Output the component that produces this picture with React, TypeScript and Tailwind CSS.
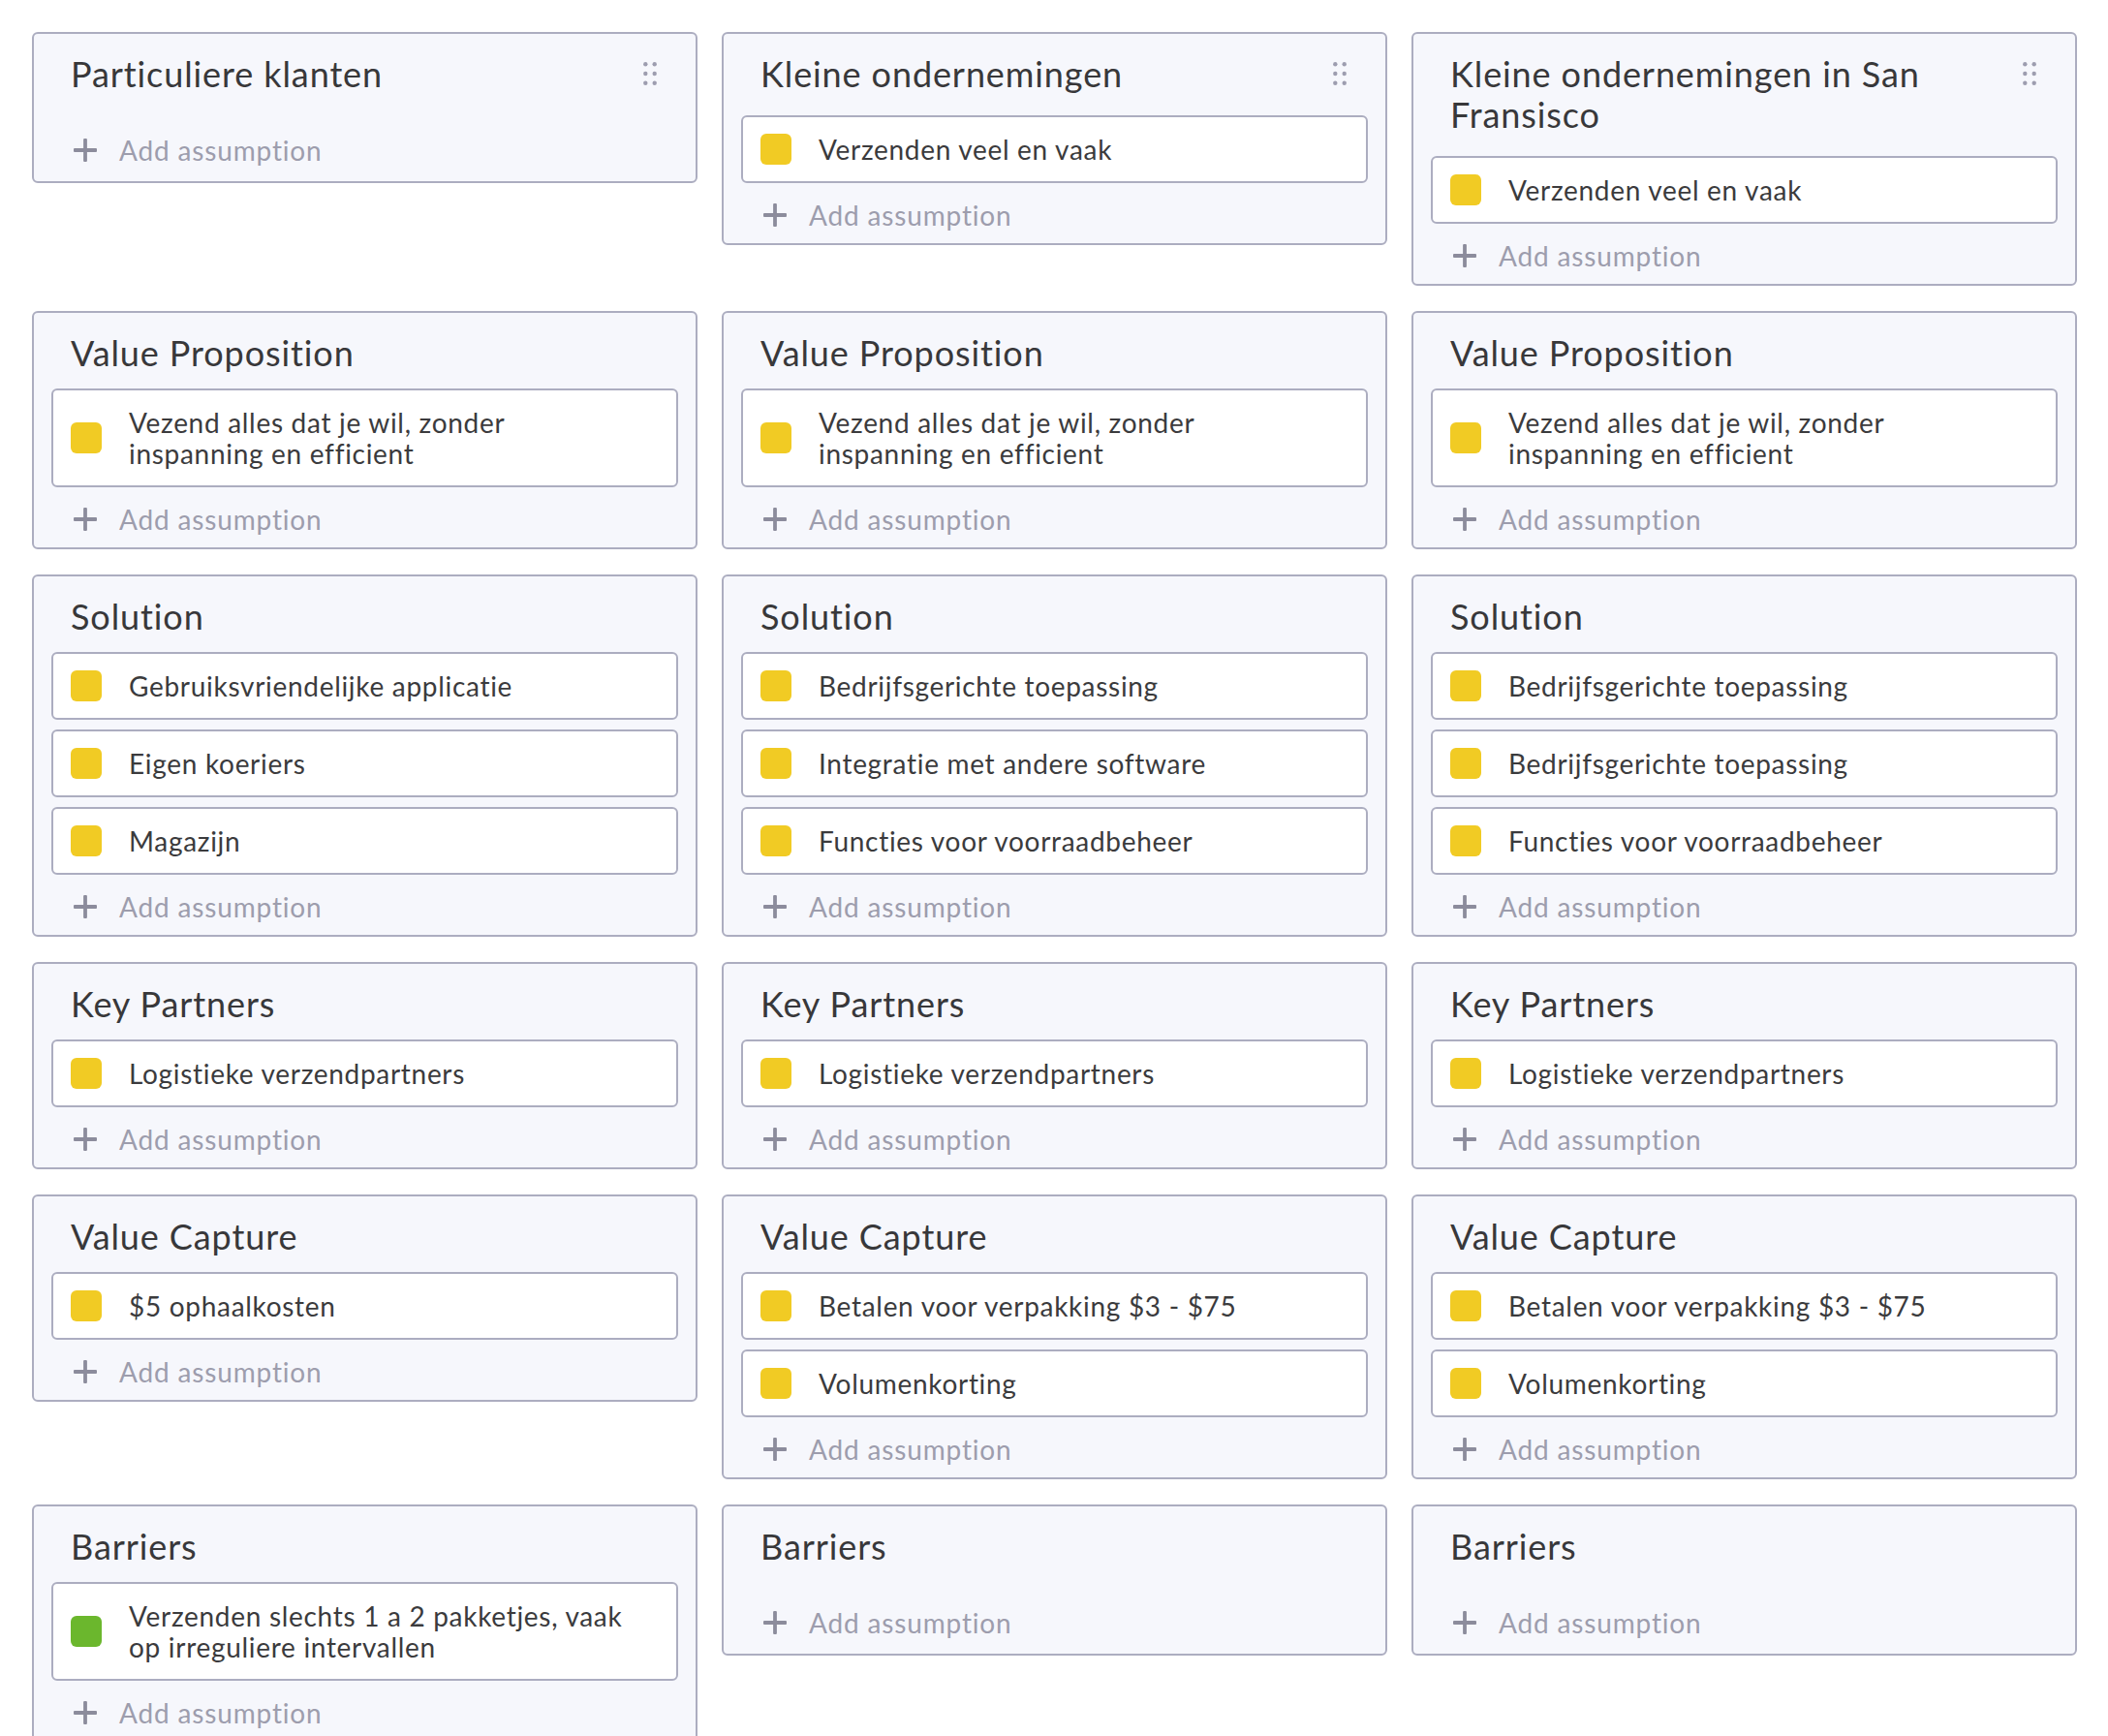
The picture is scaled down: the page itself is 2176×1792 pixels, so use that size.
import React from "react";

type Item = { text: string; color?: "yellow" | "green" };
type Card = { title: string; items: Item[]; header?: boolean };

const y = (text: string): Item => ({ text, color: "yellow" });

const cards: Card[] = [
  { title: "Particuliere klanten", items: [], header: true },
  { title: "Kleine ondernemingen", items: [y("Verzenden veel en vaak")], header: true },
  { title: "Kleine ondernemingen in San Fransisco", items: [y("Verzenden veel en vaak")], header: true },
  { title: "Value Proposition", items: [y("Vezend alles dat je wil, zonder inspanning en efficient")] },
  { title: "Value Proposition", items: [y("Vezend alles dat je wil, zonder inspanning en efficient")] },
  { title: "Value Proposition", items: [y("Vezend alles dat je wil, zonder inspanning en efficient")] },
  { title: "Solution", items: [y("Gebruiksvriendelijke applicatie"), y("Eigen koeriers"), y("Magazijn")] },
  { title: "Solution", items: [y("Bedrijfsgerichte toepassing"), y("Integratie met andere software"), y("Functies voor voorraadbeheer")] },
  { title: "Solution", items: [y("Bedrijfsgerichte toepassing"), y("Bedrijfsgerichte toepassing"), y("Functies voor voorraadbeheer")] },
  { title: "Key Partners", items: [y("Logistieke verzendpartners")] },
  { title: "Key Partners", items: [y("Logistieke verzendpartners")] },
  { title: "Key Partners", items: [y("Logistieke verzendpartners")] },
  { title: "Value Capture", items: [y("$5 ophaalkosten")] },
  { title: "Value Capture", items: [y("Betalen voor verpakking $3 - $75"), y("Volumenkorting")] },
  { title: "Value Capture", items: [y("Betalen voor verpakking $3 - $75"), y("Volumenkorting")] },
  { title: "Barriers", items: [{ text: "Verzenden slechts 1 a 2 pakketjes, vaak op irreguliere intervallen", color: "green" }] },
  { title: "Barriers", items: [] },
  { title: "Barriers", items: [] },
];

function DragHandle() {
  return (
    <svg width="14" height="24" viewBox="0 0 14 24" className="shrink-0 mt-[9px] mr-[22px]" aria-hidden>
      {[2.3, 12, 21.7].map((cy) => (
        <React.Fragment key={cy}>
          <circle cx="2.3" cy={cy} r="2.2" fill="#9d9daf" />
          <circle cx="11.7" cy={cy} r="2.2" fill="#9d9daf" />
        </React.Fragment>
      ))}
    </svg>
  );
}

function PlusIcon() {
  return (
    <svg width="24" height="24" viewBox="0 0 24 24" className="shrink-0" aria-hidden>
      <rect x="10.1" y="0" width="3.8" height="24" rx="1" fill="#8c8c9c" />
      <rect x="0" y="10.1" width="24" height="3.8" rx="1" fill="#8c8c9c" />
    </svg>
  );
}

function AssumptionItem({ item }: { item: Item }) {
  return (
    <div className="flex items-center rounded-[6px] border-2 border-[#acadc0] bg-white pl-[18px] pr-[40px] py-[17px]">
      <div
        className={
          item.color === "green"
            ? "h-8 w-8 shrink-0 rounded-[6px] bg-[#6bb72d]"
            : "h-8 w-8 shrink-0 rounded-[6px] bg-[#f1cb24]"
        }
      />
      <div className="ml-7 max-w-[520px] text-[28px] leading-8 tracking-[0.025em] text-[#3b3b3d]">{item.text}</div>
    </div>
  );
}

function CardView({ card }: { card: Card }) {
  const empty = card.items.length === 0;
  return (
    <div className="rounded-[6px] border-2 border-[#acadc0] bg-[#f6f7fc] px-[18px] pt-5 pb-[6px]">
      {card.header ? (
        <div className={empty ? "mb-4 flex items-start" : "mb-[22px] flex items-start"}>
          <h2 className="flex-1 pl-5 pr-6 text-[36px] font-normal leading-[42px] tracking-[0.025em] text-[#38383a]">
            {card.title}
          </h2>
          <DragHandle />
        </div>
      ) : (
        <h2 className="mb-4 pl-5 text-[36px] font-normal leading-[42px] tracking-[0.025em] text-[#38383a]">
          {card.title}
        </h2>
      )}
      <div className="flex flex-col gap-[10px]">
        {card.items.map((it, i) => (
          <AssumptionItem key={i} item={it} />
        ))}
      </div>
      <div
        className={
          empty
            ? "mt-[19px] mb-[3px] flex h-[46px] items-center pl-[23px]"
            : "mt-[10px] flex h-[46px] items-center pl-[23px]"
        }
      >
        <PlusIcon />
        <span className="ml-[23px] text-[28px] leading-8 tracking-[0.03em] text-[#9d9dad]">Add assumption</span>
      </div>
    </div>
  );
}

export default function App() {
  return (
    <div
      className="min-h-screen bg-white pt-[33px] pl-[33px] pr-[32px] pb-8"
      style={{ fontFamily: "Lato, 'Open Sans', 'Liberation Sans', sans-serif" }}
    >
      <div className="grid grid-cols-[repeat(3,687px)] items-start gap-x-[25px] gap-y-[26px]">
        {cards.map((c, i) => (
          <CardView key={i} card={c} />
        ))}
      </div>
    </div>
  );
}
